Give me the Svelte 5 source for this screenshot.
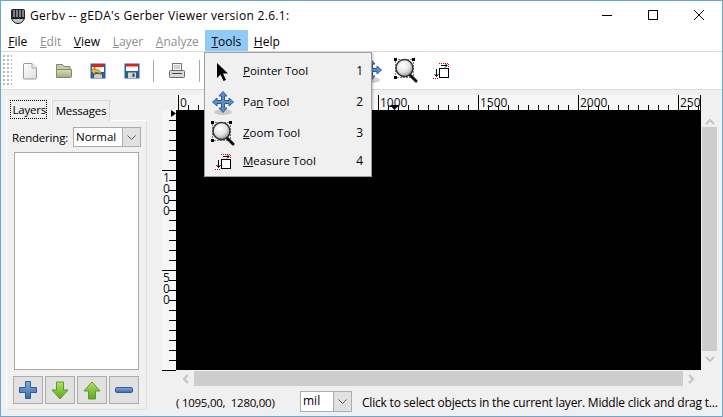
<script>
	const menus = [
		{ key: 'F', post: 'ile', off: false },
		{ key: 'E', post: 'dit', off: true },
		{ key: 'V', post: 'iew', off: false },
		{ key: 'L', post: 'ayer', off: true },
		{ key: 'A', post: 'nalyze', off: true },
		{ key: 'T', post: 'ools', off: false, open: true },
		{ key: 'H', post: 'elp', off: false }
	];
	const tools = [
		{ pre: '', key: 'P', post: 'ointer Tool', n: 1, icon: 'pointer' },
		{ pre: 'Pa', key: 'n', post: ' Tool', n: 2, icon: 'pan' },
		{ pre: '', key: 'Z', post: 'oom Tool', n: 3, icon: 'zoom' },
		{ pre: '', key: 'M', post: 'easure Tool', n: 4, icon: 'measure' }
	];

	// ruler ticks, one every 10px, a long one every 100px
	const hTicks = [];
	for (let x = 2; x <= 524; x += 10) hTicks.push({ x, major: (x - 2) % 100 === 0 });
	const hLabels = [
		{ x: 2, t: '0' },
		{ x: 202, t: '1000' },
		{ x: 302, t: '1500' },
		{ x: 402, t: '2000' },
		{ x: 502, t: '2500' }
	];
	const vTicks = [];
	for (let y = 10; y <= 260; y += 10) vTicks.push({ y, major: (y - 60) % 100 === 0 });
	const vLabels = [
		{ y: 60, digits: ['1', '0', '0', '0'] },
		{ y: 160, digits: ['5', '0', '0'] }
	];
</script>

{#snippet icon(name)}
	{#if name === 'pointer'}
		<svg width="24" height="24" viewBox="0 0 24 24"><path d="M6 3V18L9.500 14.500 12.500 21 15 20 12 13.500H17z" fill="#000" /></svg>
	{:else if name === 'pan'}
		<svg width="24" height="26" viewBox="0 0 24 26">
			<ellipse cx="12" cy="22" rx="9" ry="3" fill="#bbb" opacity="0.7" />
			<path d="M12 1.500l4 4.500h-2.500v4.500H18V8l4.500 4-4.500 4v-2.500h-4.500V18H16l-4 4.500L8 18h2.500v-4.500H6V16l-4.500-4L6 8v2.500h4.500V6H8z" fill="#5b8ec9" stroke="#2d5c9a" />
		</svg>
	{:else if name === 'zoom'}
		<svg width="24" height="26" viewBox="0 0 24 26">
			<rect x="1.500" y="1.500" width="18" height="18" fill="none" stroke="#000" stroke-dasharray="1 2" />
			<rect x="0" y="0" width="3" height="3" />
			<rect x="18" y="0" width="3" height="3" />
			<rect x="0" y="18" width="3" height="3" />
			<path d="M15 16l7 7" stroke="#111" stroke-width="3" stroke-linecap="round" />
			<circle cx="10.500" cy="10" r="8.500" fill="url(#lens)" stroke="#333" stroke-width="1.500" />
		</svg>
	{:else if name === 'measure'}
		<svg width="24" height="24" viewBox="-4 -4 24 24">
			<rect x="6.500" y="5.500" width="9" height="9" fill="#fff" stroke="#000" />
			<path d="M8 2.500h6M12 0.500l2 2-2 2M3.500 6v7M1.500 11l2 2.500 2-2.500" fill="none" stroke="#000" />
			<path d="M6 0.500h9.500v4M0 15.500h6" fill="none" stroke="#e00" stroke-dasharray="1 1" />
		</svg>
	{/if}
{/snippet}

<svg class="defs" width="0" height="0">
	<defs>
		<radialGradient id="lens" cx="0.400" cy="0.350" r="0.700">
			<stop offset="0" stop-color="#fff" />
			<stop offset="0.550" stop-color="#e4e4e4" />
			<stop offset="1" stop-color="#8c8c8c" />
		</radialGradient>
		<linearGradient id="page" x1="0" y1="0" x2="1" y2="1">
			<stop offset="0" stop-color="#fff" />
			<stop offset="1" stop-color="#ddd" />
		</linearGradient>
		<linearGradient id="folder" x1="0" y1="0" x2="0" y2="1">
			<stop offset="0" stop-color="#d9dcc0" />
			<stop offset="1" stop-color="#a5aa84" />
		</linearGradient>
		<linearGradient id="green" x1="0" y1="0" x2="0" y2="1">
			<stop offset="0" stop-color="#b5e26a" />
			<stop offset="1" stop-color="#5ca51e" />
		</linearGradient>
		<linearGradient id="blue" x1="0" y1="0" x2="0" y2="1">
			<stop offset="0" stop-color="#86acd8" />
			<stop offset="1" stop-color="#3a6aa8" />
		</linearGradient>
	</defs>
</svg>

<div class="window">
	<header class="titlebar">
		<svg class="app-icon" width="16" height="16" viewBox="0 0 16 16">
			<circle cx="8" cy="9" r="6.500" fill="#b9c6d4" stroke="#111" />
			<rect x="1" y="1" width="14" height="9" rx="2" fill="#222" />
			<path d="M4 2v7M7 2v7M10 2v7M13 2v7" stroke="#dde" stroke-width="1" />
			<path d="M1.500 10.500h13" stroke="#111" />
		</svg>
		<span class="title">Gerbv -- gEDA's Gerber Viewer version 2.6.1:</span>
		<div class="caption">
			<svg width="46" height="29" viewBox="0 0 46 29"><path d="M18 14.500h10" stroke="#000" /></svg>
			<svg width="46" height="29" viewBox="0 0 46 29"><rect x="18.500" y="9.500" width="9" height="9" fill="none" stroke="#000" /></svg>
			<svg width="46" height="29" viewBox="0 0 46 29"><path d="M18 9l10 10M28 9L18 19" stroke="#000" fill="none" /></svg>
		</div>
	</header>

	<nav class="menubar">
		{#each menus as m}
			<span class="menu" class:off={m.off} class:open={m.open}><u>{m.key}</u>{m.post}</span>
		{/each}
	</nav>

	<div class="toolbar">
		<div class="grip"></div>
		<span class="tb">
			<svg width="16" height="18" viewBox="0 0 16 18"><path d="M1.500 2.500a1 1 0 0 1 1-1H10l4.500 4.500v10a1 1 0 0 1-1 1h-11a1 1 0 0 1-1-1z" fill="url(#page)" stroke="#9a9a9a" /><path d="M10 1.500v4.500h4.500" fill="#eee" stroke="#aaa" /></svg>
		</span>
		<span class="tb">
			<svg width="18" height="16" viewBox="0 0 18 16"><path d="M1.500 1.500h6l1.500 2h6v3h-13.500z" fill="#c7cbab" stroke="#85896a" /><path d="M1.500 6.500h15v7a1 1 0 0 1-1 1h-14z" fill="url(#folder)" stroke="#85896a" /></svg>
		</span>
		<span class="tb">
			<svg width="16" height="16" viewBox="0 0 16 16"><rect x="0.500" y="0.500" width="15" height="15" fill="#2d5c9a" /><rect x="2" y="1" width="12" height="8" fill="#fff" /><rect x="2" y="1" width="12" height="3" fill="#e02020" /><rect x="4" y="11" width="8" height="4" fill="#ccc" /><path d="M1 8l4-4v2.500c4 0 6 1 6 5.500-1-2-3-2.500-6-2.500v2.500z" fill="#e2b93a" stroke="#7a5c10" stroke-width="0.700" /></svg>
		</span>
		<span class="tb">
			<svg width="16" height="16" viewBox="0 0 16 16"><rect x="0.500" y="0.500" width="15" height="15" fill="#2d5c9a" /><rect x="2" y="1" width="12" height="7" fill="#fff" /><rect x="2" y="1" width="12" height="2.500" fill="#e02020" /><rect x="4" y="9.500" width="8" height="5.500" fill="#d5d5d5" /><rect x="8.500" y="10.500" width="2" height="3.500" fill="#345" /></svg>
		</span>
		<span class="sep first"></span>
		<span class="tb print">
			<svg width="16" height="16" viewBox="0 0 16 16"><rect x="3.500" y="0.500" width="9" height="7" fill="#f4f4f4" stroke="#777" /><rect x="0.500" y="7.500" width="15" height="7" rx="1" fill="#d8d8d8" stroke="#666" /><path d="M3 10.500h10" stroke="#444" /><path d="M5 3h6M5 5h6" stroke="#aaa" /></svg>
		</span>
		<span class="sep"></span>
		<span class="spacer"></span>
		<span class="tb tool">{@render icon('pan')}</span>
		<span class="tb tool">{@render icon('zoom')}</span>
		<span class="tb tool">{@render icon('measure')}</span>
	</div>

	<div class="main">
		<aside class="side">
			<div class="tabs">
				<span class="tab active"><span class="focus">Layers</span></span>
				<span class="tab">Messages</span>
			</div>
			<div class="panel">
				<div class="render-row">
					<span class="render-label">Rendering:</span>
					<div class="combo render-combo">
						<span class="combo-value">Normal</span>
						<span class="combo-btn"><svg width="9" height="5" viewBox="0 0 9 5"><path d="M0.500 0.500l4 4 4-4" fill="none" stroke="#555" /></svg></span>
					</div>
				</div>
				<div class="layers"></div>
				<div class="layer-btns">
					<button aria-label="Add">
						<svg width="20" height="20" viewBox="0 0 20 20"><path d="M7.500 1.500h5v6h6v5h-6v6h-5v-6h-6v-5h6z" fill="url(#blue)" stroke="#2d5c9a" /></svg>
					</button>
					<button aria-label="Down">
						<svg width="18" height="19" viewBox="0 0 18 19"><path d="M5.500 1h7v8h4.500l-8 9-8-9h4.500z" fill="url(#green)" stroke="#5c9a24" /></svg>
					</button>
					<button aria-label="Up">
						<svg width="18" height="19" viewBox="0 0 18 19"><path d="M5.500 18h7v-8h4.500l-8-9-8 9h4.500z" fill="url(#green)" stroke="#5c9a24" /></svg>
					</button>
					<button aria-label="Remove">
						<svg width="20" height="8" viewBox="0 0 20 8"><rect x="1.500" y="1.500" width="17" height="5" rx="1.500" fill="url(#blue)" stroke="#2d5c9a" /></svg>
					</button>
				</div>
			</div>
		</aside>

		<section class="view">
			<div class="view-grid">
				<span></span>
				<svg class="hruler" width="525" height="15" viewBox="0 0 525 15">
					{#each hTicks as t}
						<path d={`M${t.x + 0.5} ${t.major ? 0 : 10}V15`} stroke="#000" />
					{/each}
					<path d="M524.500 0V15" stroke="#000" />
					{#each hLabels as l}
						<text x={l.x + 2} y="12">{l.t}</text>
					{/each}
					<path d="M214 10h9l-4.500 5z" fill="#000" />
				</svg>
				<span></span>

				<svg class="vruler" width="14" height="261" viewBox="0 0 14 261">
					{#each vTicks as t}
						<path d={`M${t.major ? 0 : 7} ${t.y + 0.5}H14`} stroke="#000" />
					{/each}
					{#each vLabels as l}
						{#each l.digits as d, i}
							<text x="1" y={l.y + 12 + i * 11}>{d}</text>
						{/each}
					{/each}
					<path d="M9 0l5 3.500-5 3.500z" fill="#000" />
				</svg>
				<div class="canvas"></div>
				<div class="vscroll">
					<svg width="10" height="6" viewBox="0 0 10 6"><path d="M1 5l4-4 4 4" fill="none" stroke="#c4c4c4" stroke-width="2" /></svg>
					<div class="vthumb"></div>
					<svg width="10" height="6" viewBox="0 0 10 6"><path d="M1 1l4 4 4-4" fill="none" stroke="#c4c4c4" stroke-width="2" /></svg>
				</div>

				<span></span>
				<div class="hscroll">
					<svg width="6" height="10" viewBox="0 0 6 10"><path d="M5 1L1 5l4 4" fill="none" stroke="#c4c4c4" stroke-width="2" /></svg>
					<div class="hthumb"></div>
					<svg width="6" height="10" viewBox="0 0 6 10"><path d="M1 1l4 4-4 4" fill="none" stroke="#c4c4c4" stroke-width="2" /></svg>
				</div>
				<span></span>
			</div>

			<div class="status">
				<span class="coords">( 1095,00,&nbsp; 1280,00)</span>
				<div class="combo unit-combo">
					<span class="combo-value">mil</span>
					<span class="combo-btn"><svg width="9" height="5" viewBox="0 0 9 5"><path d="M0.500 0.500l4 4 4-4" fill="none" stroke="#555" /></svg></span>
				</div>
				<span class="hint">Click to select objects in the current layer. Middle click and drag t...</span>
			</div>
		</section>
	</div>

	<div class="dropdown">
		{#each tools as t}
			<div class="item {t.icon}">
				<span class="item-icon">{@render icon(t.icon)}</span>
				<span class="item-label">{t.pre}<u>{t.key}</u>{t.post}</span>
				<span class="item-num">{t.n}</span>
			</div>
		{/each}
	</div>
</div>

<style>
	:global(body) {
		margin: 0;
		background: #f0f0f0;
	}
	.defs {
		position: absolute;
	}
	.window {
		position: relative;
		box-sizing: border-box;
		width: 723px;
		height: 417px;
		display: flex;
		flex-direction: column;
		border: 1px solid #6fa6cf;
		background: #f0f0f0;
		font-family: "Open Sans", "Noto Sans", sans-serif;
		font-size: 12px;
		color: #000;
		overflow: hidden;
	}
	.titlebar {
		height: 29px;
		flex: none;
		display: flex;
		align-items: center;
		background: #fff;
		padding-left: 9px;
	}
	.app-icon {
		margin-right: 4px;
	}
	.title {
		flex: 1;
		letter-spacing: 0.3px;
	}
	.caption {
		display: flex;
		height: 29px;
	}
	.menubar {
		height: 21px;
		flex: none;
		display: flex;
		background: #fff;
		border-bottom: 1px solid #dcdcdc;
		padding-left: 1px;
	}
	.menu {
		padding: 0 6.300px;
		line-height: 24px;
	}
	.menu.off {
		color: #8f8f8f;
	}
	.menu.open {
		background: #91c9f7;
	}
	.toolbar {
		height: 37px;
		flex: none;
		display: flex;
		align-items: center;
		background: #fff;
		border-bottom: 1px solid #dcdcdc;
	}
	.grip {
		width: 10px;
		height: 33px;
		margin: 0 1px 0 1px;
		background-image: radial-gradient(#b8b8b8 0.8px, transparent 1px);
		background-size: 4px 4px;
	}
	.tb {
		width: 34px;
		display: flex;
		justify-content: center;
		flex: none;
	}
	.tb.print {
		width: 45px;
	}
	.tb.tool {
		width: 35px;
	}
	.sep {
		width: 1px;
		height: 22px;
		background: #a8a8a8;
		flex: none;
	}
	.sep.first {
		margin-left: 4px;
	}
	.spacer {
		width: 153px;
		flex: none;
	}
	.main {
		flex: 1;
		display: flex;
		min-height: 0;
	}
	.side {
		width: 141px;
		margin: 6px 0 6px 5px;
		display: flex;
		flex-direction: column;
		flex: none;
		font-size: 11.500px;
	}
	.tabs {
		display: flex;
		align-items: flex-end;
		height: 24px;
		flex: none;
		position: relative;
		top: 1px;
	}
	.tab {
		box-sizing: border-box;
		height: 21px;
		width: 58px;
		text-align: center;
		line-height: 20px;
		letter-spacing: -0.2px;
		background: #f0f0f0;
		border: 1px solid #d9d9d9;
		border-bottom: none;
	}
	.tab.active {
		height: 24px;
		width: 46px;
		padding: 2px 4px 2px 3px;
		line-height: 20px;
		position: relative;
		z-index: 1;
		background: #f0f0f0;
		border-color: #fff;
	}
	.focus {
		display: block;
		outline: 1px dotted #000;
		outline-offset: -1px;
		height: 19px;
		text-align: right;
		padding-right: 1px;
	}
	.panel {
		flex: 1;
		border: 1px solid #d9d9d9;
		border-color: #fff #e0e0e0 #e0e0e0 #fff;
		display: flex;
		flex-direction: column;
		padding: 6px 5px 5px 5px;
		min-height: 0;
	}
	.render-row {
		display: flex;
		align-items: center;
		justify-content: space-between;
		height: 20px;
	}
	.render-label {
		letter-spacing: -0.2px;
	}
	.combo {
		box-sizing: border-box;
		display: flex;
		border: 1px solid #adadad;
		background: #fff;
		height: 20px;
		flex: none;
	}
	.render-combo {
		width: 68px;
	}
	.unit-combo {
		width: 52px;
		height: 21px;
	}
	.combo-value {
		flex: 1;
		padding-left: 2px;
		line-height: 18px;
	}
	.combo-btn {
		width: 17px;
		background: #e1e1e1;
		border-left: 1px solid #adadad;
		display: flex;
		align-items: center;
		justify-content: center;
	}
	.layers {
		flex: 1;
		margin: 5px 2px 6px 2px;
		background: #fff;
		border: 1px solid #a9a9a9;
	}
	.layer-btns {
		display: flex;
		gap: 2px;
		height: 28px;
		padding-left: 1px;
	}
	.layer-btns button {
		box-sizing: border-box;
		width: 30px;
		height: 28px;
		padding: 0;
		background: #e1e1e1;
		border: 1px solid #adadad;
		display: flex;
		align-items: center;
		justify-content: center;
	}
	.view {
		flex: 1;
		display: flex;
		flex-direction: column;
		min-width: 0;
	}
	.view-grid {
		display: grid;
		grid-template-columns: 14px 525px 18px;
		grid-template-rows: 15px 261px 15px;
		margin: 5px 0 0 15px;
	}
	.hruler,
	.vruler {
		display: block;
		background: #f6f6f6;
	}
	.hruler text,
	.vruler text {
		font-family: "Open Sans", "Noto Sans", sans-serif;
		font-size: 12px;
		fill: #111;
	}
	.canvas {
		background: #000;
		height: 260px;
	}
	.vscroll {
		display: flex;
		flex-direction: column;
		align-items: center;
		padding: 9px 1px 6px 0;
		height: 260px;
		box-sizing: border-box;
	}
	.vscroll svg {
		flex: none;
	}
	.vthumb {
		width: 15px;
		height: 224px;
		background: #cdcdcd;
		margin: 2px 0 5px;
		flex: none;
	}
	.hscroll {
		display: flex;
		align-items: center;
		padding-left: 7px;
	}
	.hthumb {
		width: 489px;
		height: 15px;
		background: #cdcdcd;
		margin: 0 5px;
		flex: none;
	}
	.status {
		display: flex;
		align-items: center;
		margin-top: 5px;
		margin-left: 29px;
	}
	.coords {
		width: 124px;
		flex: none;
		font-size: 11.500px;
		letter-spacing: -0.25px;
		padding-top: 1px;
		box-sizing: border-box;
	}
	.hint {
		margin-left: 10px;
		white-space: nowrap;
		letter-spacing: -0.2px;
		padding-top: 1px;
	}
	.dropdown {
		position: absolute;
		left: 203px;
		top: 51px;
		box-sizing: border-box;
		width: 168px;
		height: 125px;
		background: #f0f0f0;
		border: 1px solid #a0a0a0;
		box-shadow: 1px 1px 2px rgba(0, 0, 0, 0.25);
		padding-top: 3px;
		font-size: 11.500px;
	}
	.item {
		display: flex;
		align-items: center;
		height: 31px;
	}
	.item.measure {
		height: 25px;
	}
	.item-icon {
		width: 36px;
		margin-right: 2px;
		display: flex;
		justify-content: center;
		flex: none;
	}
	.item-label {
		flex: 1;
		margin-bottom: 2px;
	}
	.item-num {
		margin-right: 8px;
		margin-bottom: 2px;
		font-size: 12px;
	}
</style>
